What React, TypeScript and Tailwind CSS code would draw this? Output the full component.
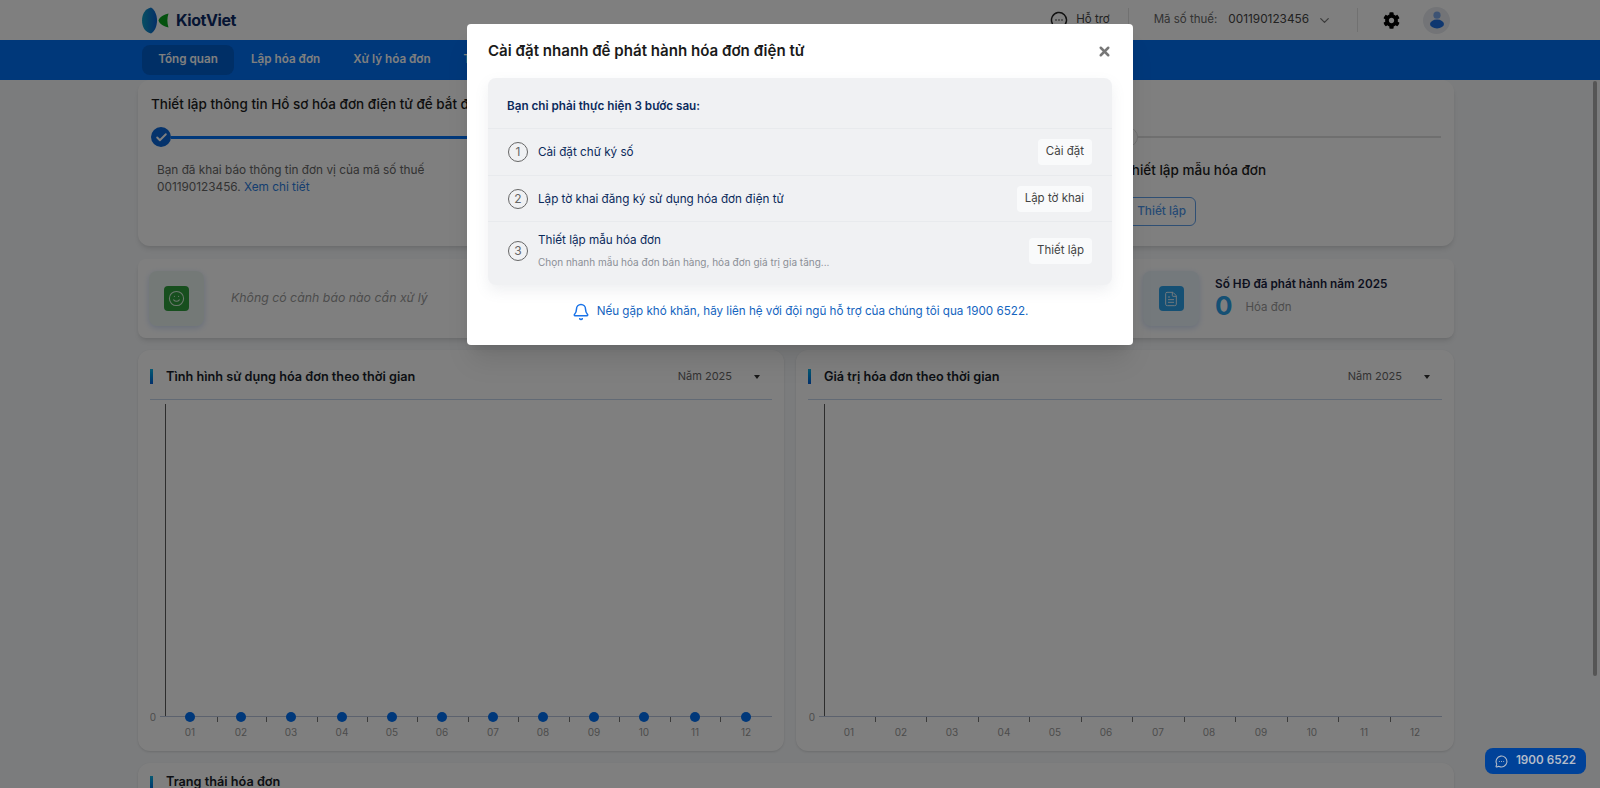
import React from "react";
import { Bell, Check, ChevronDown, FileText, MessageCircleMore, Smile, X } from "lucide-react";
import { FaCog } from "react-icons/fa";

const months = ["01","02","03","04","05","06","07","08","09","10","11","12"];

function Logo() {
  return (
    <svg width="27" height="27" viewBox="0 0 27 27" className="shrink-0">
      <defs>
        <linearGradient id="lg" x1="0" x2="1" y1="0" y2="0">
          <stop offset="0" stopColor="#0f9fc5" />
          <stop offset="1" stopColor="#0b5fd0" />
        </linearGradient>
      </defs>
      <path d="M9 0.5C3 2 0 7 0 13.5S3 25 9 26.5C13 24 15 19 15 13.5S13 3 9 0.5Z" fill="url(#lg)" />
      <path d="M26.5 6.5C22 7.5 17.5 10 16.5 13.5C17.5 17 22 19.5 26.5 20.5C25 15.5 25 11.5 26.5 6.5Z" fill="#0aa51f" />
    </svg>
  );
}

function Avatar() {
  return (
    <div className="w-[27px] h-[27px] rounded-full bg-[#e6e9ee] flex items-center justify-center">
      <svg width="16" height="18" viewBox="0 0 16 18">
        <circle cx="8" cy="4.2" r="3.6" fill="#7ba7e8" />
        <ellipse cx="8" cy="13" rx="7" ry="4.4" fill="#1f6fe0" />
      </svg>
    </div>
  );
}

function Chart({ width, axisX, xs, ticks, dots }: { width: number; axisX: number; xs: number[]; ticks: number[]; dots: boolean }) {
  return (
    <svg width={width} height={345} className="block">
      <line x1={axisX + 0.5} x2={axisX + 0.5} y1={4} y2={317} stroke="#5a5a5a" />
      <line x1={axisX - 5} x2={width} y1={316.5} y2={316.5} stroke="#b9c4dc" />
      {ticks.map((t) => (
        <line key={t} x1={t + 0.5} x2={t + 0.5} y1={317} y2={322} stroke="#777" />
      ))}
      <text x={axisX - 12} y={321} fontSize="10" fill="#999" textAnchor="middle" fontFamily="Inter, sans-serif">0</text>
      {xs.map((x, i) => (
        <g key={x}>
          {dots && <circle cx={x} cy={317} r={5} fill="#0070f4" />}
          <text x={x} y={336} fontSize="10" fill="#999" textAnchor="middle" fontFamily="Inter, sans-serif">{months[i]}</text>
        </g>
      ))}
    </svg>
  );
}

function ChartCard({ title, className, width, axisX, xs, ticks, dots }: { title: string; className: string; width: number; axisX: number; xs: number[]; ticks: number[]; dots: boolean }) {
  return (
    <div className={`bg-white rounded-xl shadow-sm px-3 h-[401px] ${className}`}>
      <div className="h-[50px] pt-[4px] flex items-center border-b border-[#c5d4ea]">
        <span className="w-[3px] h-[15px] bg-gradient-to-b from-[#14b4e6] to-[#0a5fd8]" />
        <span className="ml-[13px] text-[12.7px] font-semibold text-[#1a1f2b]">{title}</span>
        <span className="ml-auto text-[11px] text-[#666]">Năm 2025</span>
        <span className="ml-[22px] mr-[12px] w-0 h-0 border-x-[3.5px] border-x-transparent border-t-[4px] border-t-[#333]" />
      </div>
      <Chart width={width} axisX={axisX} xs={xs} ticks={ticks} dots={dots} />
    </div>
  );
}

function Step({ n, title, sub, action, h }: { n: number; title: string; sub?: string; action: string; h: string }) {
  return (
    <div className={`flex items-center border-t border-[#e8eaed] pl-5 pr-5 ${h} ${sub ? "pb-[6px]" : ""}`}>
      <span className="w-5 h-5 rounded-full border border-[#666] flex items-center justify-center text-[12px] text-[#666] shrink-0">{n}</span>
      <div className="ml-[10px]">
        <div className="text-[11.7px] text-[#0b2a5b] leading-[16px]">{title}</div>
        {sub && <div className="text-[10px] text-[#8b8f96] leading-[14px] mt-[7px]">{sub}</div>}
      </div>
      <button className="ml-auto h-[26px] px-2 rounded bg-[#f9fafb] text-[11.5px] text-[#444]">{action}</button>
    </div>
  );
}

export default function App() {
  const lx = [40, 91, 141, 192, 242, 292, 343, 393, 444, 494, 545, 596];
  const lt = [67, 116, 167, 217, 267, 318, 368, 419, 469, 520, 570];
  const rx = [41, 93, 144, 196, 247, 298, 350, 401, 453, 504, 556, 607];
  const rt = [67, 118, 170, 221, 273, 324, 376, 427, 479, 530, 582];
  return (
    <div className="relative w-[1600px] h-[788px] overflow-hidden bg-[#f7f9fb] font-['Inter','Noto_Sans',sans-serif]">
      <header className="h-10 bg-white flex items-center pl-[142px]">
        <Logo />
        <span className="ml-[7px] text-[16px] font-bold text-[#0c2a66] tracking-tight">KiotViet</span>
        <div className="ml-auto flex items-center pr-[150px]">
          <MessageCircleMore size={18} className="text-[#222]" strokeWidth={2} />
          <span className="ml-[8px] text-[11.5px] text-[#444]">Hỗ trợ</span>
          <span className="ml-[18px] w-px h-6 bg-[#e3e3e3]" />
          <span className="ml-[25px] text-[11.5px] text-[#666]">Mã số thuế:</span>
          <span className="ml-[11px] text-[11.8px] text-[#444]">001190123456</span>
          <ChevronDown size={15} className="ml-[8px] text-[#777]" />
          <span className="ml-[25px] w-px h-6 bg-[#e3e3e3]" />
          <FaCog size={17} className="ml-[25px] text-black" />
          <span className="ml-[23px]"><Avatar /></span>
        </div>
      </header>

      <nav className="h-10 bg-[#0070f4] flex items-center pl-[142px] text-[11.7px] font-semibold text-[#fff]">
        <span className="w-[92px] h-[30px] rounded-lg bg-[#005ecc] flex items-center justify-center">Tổng quan</span>
        <span className="ml-[17px]">Lập hóa đơn</span>
        <span className="ml-[33px]">Xử lý hóa đơn</span>
        <span className="ml-[33px]">Tra cứu</span>
      </nav>

      <main className="ml-[138px] w-[1316px] flex flex-col">
        <section className="h-[166px] bg-white rounded-xl shadow-md px-[13px] pt-[14px]">
          <h2 className="text-[13.5px] font-medium text-[#1c1c1c] leading-[20px]">Thiết lập thông tin Hồ sơ hóa đơn điện tử để bắt đầu sử dụng</h2>
          <div className="flex mt-[13px]">
            <div className="flex-1">
              <div className="flex items-center">
                <span className="w-5 h-5 rounded-full bg-[#0a66d8] flex items-center justify-center shrink-0">
                  <Check size={13} strokeWidth={3.5} className="text-white" />
                </span>
                <span className="flex-1 h-[3px] bg-[#0070f4]" />
              </div>
              <p className="mt-[15px] ml-[6px] text-[11.8px] leading-[17px] text-[#666]">
                Bạn đã khai báo thông tin đơn vị của mã số thuế
                <br />
                001190123456. <span className="text-[#2b7de0]">Xem chi tiết</span>
              </p>
            </div>
            <div className="w-[323px]">
              <div className="flex items-center">
                <span className="w-5 h-5 rounded-full border border-[#dedede] bg-white shrink-0" />
                <span className="flex-1 h-[2px] bg-[#dedede]" />
              </div>
              <div className="mt-[13px] ml-[5px] text-[13.5px] font-medium text-[#1c1c1c] leading-[20px]">Thiết lập mẫu hóa đơn</div>
              <button className="mt-[17px] ml-[-8px] w-[86px] h-[29px] rounded-md border border-[#5f9fe8] text-[11.8px] text-right pr-[9px] text-[#4d94e8] font-medium">Thiết lập</button>
            </div>
          </div>
        </section>

        <section className="mt-[13px] flex gap-3 h-[79px]">
          <div className="flex-1 bg-white rounded-lg shadow-md flex items-center pl-[11px]">
            <div className="w-[55px] h-[55px] rounded-lg bg-[#e9f3ef] shadow-[0_2px_6px_rgba(120,160,230,0.35)] flex items-center justify-center">
              <span className="w-[25px] h-[25px] rounded bg-[#2e9e3c] flex items-center justify-center">
                <Smile size={17} className="text-[#d8f0dc]" strokeWidth={1.5} />
              </span>
            </div>
            <span className="ml-[27px] text-[12.3px] italic text-[#999]">Không có cảnh báo nào cần xử lý</span>
          </div>
          <div className="w-[400px] bg-white rounded-lg shadow-md flex items-center pl-[89px] justify-start">
            <div className="w-[56px] h-[55px] rounded-lg bg-[#e8f2f8] shadow-[0_2px_6px_rgba(120,160,230,0.35)] flex items-center justify-center shrink-0">
              <span className="w-[25px] h-[25px] rounded bg-[#2aa0e8] flex items-center justify-center">
                <FileText size={16} className="text-[#dff1fb]" strokeWidth={1.5} />
              </span>
            </div>
            <div className="ml-[16px] -mt-[1px]">
              <div className="text-[11.75px] font-semibold text-[#1a2340] leading-[16px] whitespace-nowrap">Số HĐ đã phát hành năm 2025</div>
              <div className="flex items-center h-[28px]">
                <span className="text-[26px] font-bold text-[#2aa0e8] leading-none">0</span>
                <span className="ml-[13px] text-[11.5px] text-[#999] mt-[4px]">Hóa đơn</span>
              </div>
            </div>
          </div>
        </section>

        <section className="mt-[12px] flex gap-3">
          <ChartCard title="Tình hình sử dụng hóa đơn theo thời gian" className="w-[646px]" width={622} axisX={15} xs={lx} ticks={lt} dots />
          <ChartCard title="Giá trị hóa đơn theo thời gian" className="flex-1" width={634} axisX={16} xs={rx} ticks={rt} dots={false} />
        </section>

        <section className="mt-[12px] bg-white rounded-xl shadow-sm px-3 h-[120px]">
          <div className="h-[38px] flex items-center">
            <span className="w-[3px] h-[15px] mt-[2px] bg-gradient-to-b from-[#14b4e6] to-[#0a5fd8]" />
            <span className="ml-[13px] text-[12.7px] font-semibold text-[#1a1f2b]">Trạng thái hóa đơn</span>
          </div>
        </section>
      </main>

      <div className="absolute inset-0 bg-black/50" />

      <div className="absolute top-[81px] right-[3px] w-[4px] h-[595px] rounded-full bg-[#555]" />

      <div className="absolute left-[1485px] top-[748px] w-[101px] h-[26px] rounded-lg bg-[#004299] flex items-center justify-center gap-[8px] text-[11.7px] font-semibold text-[#b4bcc9]">
        <MessageCircleMore size={13} />
        1900 6522
      </div>

      <div className="absolute left-[467px] top-[24px] w-[666px] h-[321px] bg-white rounded shadow-xl px-[21px]">
        <div className="h-[54px] flex items-center justify-between">
          <h1 className="text-[15.1px] font-semibold text-[#1a1a1a]">Cài đặt nhanh để phát hành hóa đơn điện tử</h1>
          <X size={15} strokeWidth={4} className="text-[#777] mt-[1px]" />
        </div>
        <div className="bg-[#f0f1f3] rounded-lg shadow-[0_6px_14px_rgba(120,130,150,0.12)]">
          <div className="h-[50px] flex items-center pl-5 pt-[8px] text-[11.7px] font-semibold text-[#0b2a5b] -indent-px">Bạn chỉ phải thực hiện 3 bước sau:</div>
          <Step n={1} title="Cài đặt chữ ký số" action="Cài đặt" h="h-[47px]" />
          <Step n={2} title="Lập tờ khai đăng ký sử dụng hóa đơn điện tử" action="Lập tờ khai" h="h-[46px]" />
          <Step n={3} title="Thiết lập mẫu hóa đơn" sub="Chọn nhanh mẫu hóa đơn bán hàng, hóa đơn giá trị gia tăng..." action="Thiết lập" h="h-[64px]" />
        </div>
        <div className="mt-[18px] flex items-center justify-center gap-[7px] text-[11.65px] text-[#1565c0]">
          <Bell size={18} className="text-[#1a73e8]" strokeWidth={2} />
          Nếu gặp khó khăn, hãy liên hệ với đội ngũ hỗ trợ của chúng tôi qua 1900 6522.
        </div>
      </div>
    </div>
  );
}
